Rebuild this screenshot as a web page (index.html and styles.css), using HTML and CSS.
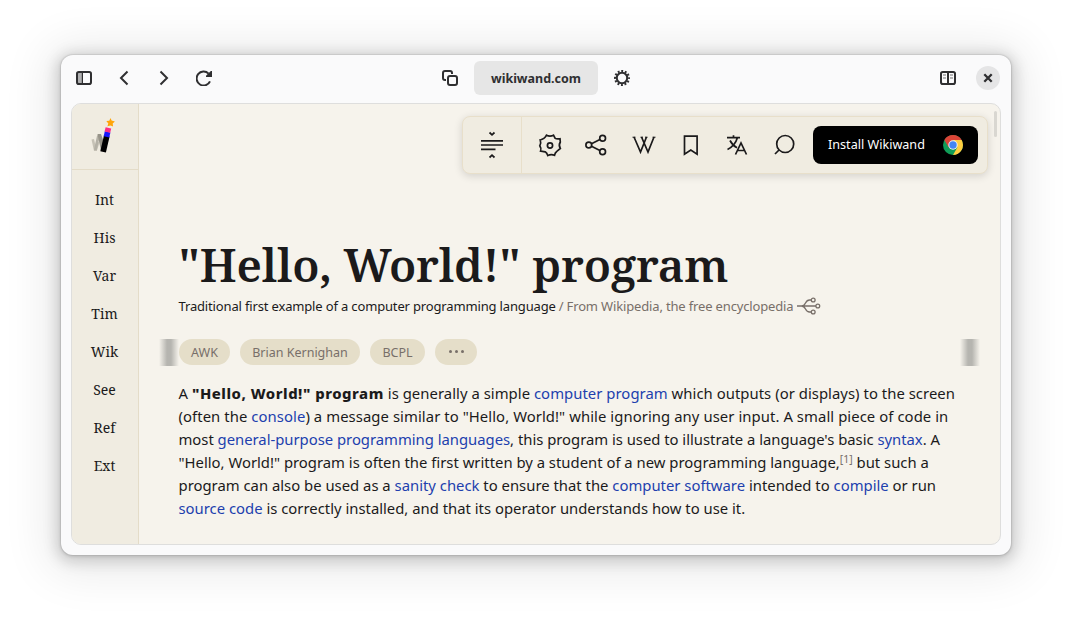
FILE: index.html
```html
<!DOCTYPE html>
<html lang="en">
<head>
<meta charset="utf-8">
<title>"Hello, World!" program</title>
<link rel="stylesheet" href="styles.css">
</head>
<body>
<div class="window">
  <header class="headerbar">
    <div class="group group-start">
      <svg class="icon" viewBox="0 0 16 16"><path d="M2 3h4v10H2z" fill="#b0b0b1"/><path d="M6.4 2v12" stroke="#2f2f31" stroke-width="1.2"/><rect x="1" y="2" width="14" height="12" rx="1.8" fill="none" stroke="#2f2f31" stroke-width="2"/></svg>
      <svg class="icon line" viewBox="0 0 16 16"><path d="M11.500 1.500 5 8l6.500 6.500"/></svg>
      <svg class="icon line" viewBox="0 0 16 16"><path d="m4.500 1.500 6.500 6.500-6.500 6.500"/></svg>
      <svg class="icon line" viewBox="0 0 16 16"><path d="M14 11.400A7 7 0 1 1 12.600 3.600"/><path d="M10 7h6V1h-1.200L10 5.800z" fill="#2f2f31" stroke="none"/></svg>
    </div>
    <div class="group group-middle">
      <svg class="icon line" viewBox="0 0 16 16"><rect x="6" y="6" width="9" height="9" rx="2"/><path d="M4 10H3a2 2 0 0 1-2-2V3a2 2 0 0 1 2-2h5a2 2 0 0 1 2 2v1"/></svg>
      <div class="address">wikiwand.com</div>
      <svg class="icon" viewBox="0 0 16 16"><circle cx="8" cy="8" r="5.200" fill="none" stroke="#2f2f31" stroke-width="2"/><circle cx="8" cy="8" r="6.900" fill="none" stroke="#2f2f31" stroke-width="2.200" stroke-dasharray="1.900 1.713" stroke-dashoffset=".95"/></svg>
    </div>
    <div class="group group-end">
      <svg class="icon" viewBox="0 0 16 16"><rect x="1" y="2" width="14" height="12" rx="1.800" fill="none" stroke="#2f2f31" stroke-width="2"/><path d="M8 2v12" stroke="#2f2f31" stroke-width="2"/><path d="M3 5h3M3 8h3M10 5h3M10 8h3" stroke="#b5b5b6" stroke-width="2"/></svg>
      <div class="close"><svg class="icon line" viewBox="0 0 16 16"><path d="m4.300 4.300 7.400 7.400M11.700 4.300l-7.400 7.400" stroke-width="2.300"/></svg></div>
    </div>
  </header>
  <div class="view">
    <aside class="sidebar">
      <div class="logo">
        <svg width="28" height="38" viewBox="0 0 28 38"><path d="M.5 21.500l2.500-.6 2 8.500 1.500-6 2 1-2.700 8.600H3z" fill="#c6c2b6"/><path d="m4.300 32 3.200-14.500" stroke="#b4b1a6" stroke-width="2.800"/><path d="M6.500 16H10l3 8.500-3 8z" fill="#969388"/><path d="m9.300 33.300 5.600 1.200 3.700-16-5.600-1.200z" fill="#000"/><path d="m12.700 18.200 5.600 1.200 1.100-5-5.600-1.200z" fill="#1717fb"/><path d="m13.600 13.500 5.600 1.200 1-4.300-5.600-1.200z" fill="#fb2d87"/><path d="m19.500 0 1.100 2.600 3.300.8-2.200 2.200.4 3-2.600-1.200-3.100.9.900-2.900-2-2.400 3-.2z" fill="#ffa50a"/></svg>
      </div>
      <nav class="toc"><span>Int</span><span>His</span><span>Var</span><span>Tim</span><span>Wik</span><span>See</span><span>Ref</span><span>Ext</span></nav>
    </aside>
    <main class="content">
      <div class="scrollbar"></div>
      <div class="tools">
        <div class="tool-first"><svg width="24" height="28" viewBox="0 0 24 28" class="stroke"><path d="m9.500 1.500 2.500 2.300 2.500-2.300M9.500 26.500l2.500-2.300 2.500 2.300M1 9.800h22M1 14h22M1 18.300h14.500"/></svg></div>
        <div class="tool-list">
          <svg width="24" height="24" viewBox="0 0 24 24" class="stroke"><path d="M8.500 2.200Q12 4 15.500 2.200L17.200 5.400Q18.500 6.200 22 5.800L22.300 9Q20.300 12.300 22.300 15.500L18.800 18.400Q17.200 19.200 16.500 22.300Q13.200 20.800 9.800 22.500Q8.800 19.600 7.200 18.800L2.600 18Q3.600 15.500 1.800 12.800Q3.400 10 2.200 7Q6.400 6.200 8.500 2.200Z"/><circle cx="12" cy="12.500" r="2.600"/></svg>
          <svg width="24" height="24" viewBox="0 0 24 24" class="stroke"><circle cx="3.800" cy="12" r="2.900"/><circle cx="17.600" cy="5.200" r="2.900"/><circle cx="17.600" cy="18.700" r="2.900"/><path d="m6.500 10.700 8.400-4.200M6.500 13.300l8.400 4.200"/></svg>
          <svg width="24" height="24" viewBox="0 0 24 24" class="stroke"><path d="m2 4 6.500 15L14.500 4M9.500 4l6.500 15 6-15" stroke-width="1.700"/><path d="M.5 4.200h3M8.500 4.200h2.500M13 4.200h2.500M20.500 4.200h3" stroke-width="1"/></svg>
          <svg width="24" height="24" viewBox="0 0 24 24" class="stroke"><path d="M6.500 3.200h12.600v18L12.800 17l-6.300 4.200z"/></svg>
          <svg width="24" height="24" viewBox="0 0 24 24" class="stroke"><path d="M2 4.600h13M8.500 2.200v2.400M12.500 4.600Q10 13 2.500 16.500M5 7.500q2.500 5 7 7.200M10.500 21.500 16 10l5.500 11.500M12.500 17.500h7"/></svg>
          <svg width="24" height="24" viewBox="0 0 24 24" class="stroke"><circle cx="13.200" cy="11" r="8.500"/><path d="m7 17-4 4"/></svg>
        </div>
        <div class="install"><span>Install Wikiwand</span>
          <svg width="20" height="20" viewBox="0 0 20 20"><circle cx="10" cy="10" r="10" fill="#109d58"/><path d="M1.340 5A10 10 0 0 1 18.660 5H10L5.700 12.500z" fill="#db4437"/><path d="M18.660 5A10 10 0 0 1 10 20l4.300-7.500L10 5z" fill="#ffcd40"/><circle cx="10" cy="10" r="4.700" fill="#f1f1f1"/><circle cx="10" cy="10" r="3.700" fill="#4285f4"/></svg>
        </div>
      </div>
      <article class="article">
        <h1>"Hello, World!" program</h1>
        <div class="subtitle"><span class="desc">Traditional first example of a computer programming language</span><span class="from">/ From Wikipedia, the free encyclopedia</span>
          <svg width="24" height="18" viewBox="0 0 24 18"><path d="M0 9h19M4.500 9q2.500 0 4-3t4-3h2M4.500 9q2.500 0 4 3t4 3h2" /><circle cx="16.200" cy="3" r="1.900"/><circle cx="20.800" cy="9" r="1.900"/><circle cx="16.200" cy="15" r="1.900"/></svg>
        </div>
        <div class="tags">
          <div class="fade"></div>
          <span class="tag awk">AWK</span><span class="tag brian">Brian Kernighan</span><span class="tag bcpl">BCPL</span><span class="tag more"><i></i><i></i><i></i></span>
          <div class="fade fade-end"></div>
        </div>
        <p class="text"><span class="loose">A <b>"Hello, World!" program</b> is generally a simple <a>computer program</a> which outputs (or displays) to the screen</span><br><span class="looser">(often the <a>console</a>) a message similar to "Hello, World!" while ignoring any user input. A small piece of code in</span><br><span class="tight">most <a>general-purpose programming languages</a>, this program is used to illustrate a language's basic <a>syntax</a>. A</span><br><span>"Hello, World!" program is often the first written by a student of a new programming language,<sup>[1]</sup> but such a</span><br><span>program can also be used as a <a>sanity check</a> to ensure that the <a>computer software</a> intended to <a>compile</a> or run</span><br><span><a>source code</a> is correctly installed, and that its operator understands how to use it.</span></p>
      </article>
    </main>
  </div>
</div>
</body>
</html>
```
FILE: styles.css
```css
* { box-sizing: border-box; }
body { margin: 0; height: 622px; padding: 55px 61px; overflow: hidden; background: #fff; font-family: "Noto Sans", sans-serif; color: #1b1a1b; }
svg { display: block; flex: none; }
.window { width: 950px; height: 500px; border-radius: 12px; background: #fafafb; padding: 0 10px 10px; box-shadow: 0 0 0 1px rgba(0,0,0,.05), 0 1px 3px 1px rgba(0,0,0,.10), 0 3px 14px 5px rgba(0,0,0,.15), 0 4px 45px 16px rgba(0,0,0,.08); }
.headerbar { height: 48px; display: grid; grid-template-columns: 1fr auto 1fr; align-items: center; padding-bottom: 2px; }
.group { display: flex; align-items: center; }
.group-start { gap: 24px; padding-left: 5px; }
.group-middle { gap: 16px; }
.group-end { justify-content: flex-end; gap: 20px; padding-right: 1px; }
.icon { width: 16px; height: 16px; }
.line { fill: none; stroke: #2f2f31; stroke-width: 2; }
.address { width: 124px; height: 34px; border-radius: 6px; background: #e6e6e6; color: #2f2f31; font: 700 12.500px/35px "Noto Sans", sans-serif; text-align: center; }
.close { width: 24px; height: 24px; border-radius: 50%; background: #e5e5e6; display: grid; place-items: center; }
.view { height: 442px; border: 1px solid #dededd; border-radius: 10px; overflow: hidden; display: flex; background: #f6f3ec; }
.sidebar { width: 67px; background: #f0ece1; border-right: 1px solid #e4dcc8; }
.logo { height: 66px; border-bottom: 1px solid #e4dcc8; padding: 14px 0 0 19px; }
.toc { display: flex; flex-direction: column; align-items: center; padding: 11px 1px 0 0; }
.toc span { font: 14px/38px "Noto Serif", "Droid Serif", "DejaVu Serif", serif; }
.content { position: relative; flex: 1; padding: 12px 12px 0 39.500px; }
.scrollbar { position: absolute; right: 3px; top: 7px; width: 3px; height: 26px; border-radius: 2px; background: #d9d7d1; }
.tools { width: 526px; height: 58px; margin-left: auto; display: flex; background: #f0ece1; border: 1px solid #e8dfca; border-radius: 8px; box-shadow: 0 2px 8px rgba(0,0,0,.14); }
.tool-first { width: 59px; border-right: 1px solid #e8dfca; display: grid; place-items: center; }
.stroke { fill: none; stroke: #1b1a1b; stroke-width: 1.700; }
.tool-list { display: flex; align-items: center; gap: 22.750px; padding-left: 16px; }
.install { width: 165px; height: 38px; margin: 9px 9px 0 auto; border-radius: 8px; background: #000; color: #fff; display: flex; align-items: center; justify-content: space-between; padding: 0 15px; font-size: 12.600px; }
.install span { position: relative; top: -1px; }
.article { padding-top: 60px; }
h1 { margin: 0; height: 60px; white-space: nowrap; font: 600 45.600px/60px "Noto Serif", "Droid Serif", "DejaVu Serif", serif; letter-spacing: -.16px; }
.subtitle { height: 24px; display: flex; align-items: center; white-space: nowrap; font-size: 13px; letter-spacing: -.155px; }
.from { color: #786f69; margin-left: 3px; }
.subtitle svg { margin-left: 4px; fill: none; stroke: #786f69; stroke-width: 1.300; }
.tags { display: flex; align-items: center; gap: 10px; height: 27px; margin: 20px 8px 0 -19.500px; }
.tag { height: 26px; border-radius: 13px; background: #e5dec9; color: #786f69; font-size: 12.500px; line-height: 27px; text-align: center; flex: none; }
.fade { width: 20px; height: 27px; margin: 2px -10px 0 0; background: linear-gradient(90deg, rgba(180,179,173,0), #b6b5b0 40%, #b6b5b0 60%, rgba(180,179,173,0)); }
.fade-end { margin: 2px 0 0 auto; }
.awk { width: 51px; }
.brian { width: 120px; }
.bcpl { width: 55px; }
.more { width: 42px; display: flex; justify-content: center; align-items: center; gap: 3px; }
.more i { width: 3px; height: 3px; border-radius: 50%; background: #786f69; }
.text { margin: 17px 0 0; font-size: 14.850px; line-height: 23px; white-space: nowrap; }
.text b { font-weight: 800; letter-spacing: .530px; }
.text a { color: #213fae; }
.text sup { font-size: 10.500px; line-height: 0; color: #786f69; vertical-align: 5px; }
.loose { letter-spacing: .04px; }
.looser { letter-spacing: .07px; }
.tight { letter-spacing: -.02px; }
```
